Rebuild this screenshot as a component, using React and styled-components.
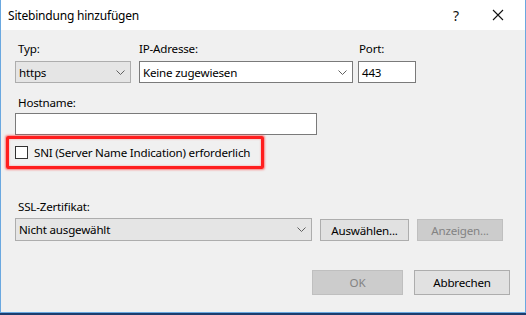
import React from 'react';
import styled, { createGlobalStyle } from 'styled-components';

const Global = createGlobalStyle`
  html, body { margin: 0; padding: 0; background: #1c3d6e; }
  body {
    font-family: "Noto Sans", "Open Sans", sans-serif;
    font-size: 11.6px;
    letter-spacing: -0.2px;
    color: #000;
    white-space: nowrap;
  }
`;

const Window = styled.div`
  width: 524px;
  height: 312px;
  border: 1px solid #6aa8e0;
  border-top: none;
  background: #f0f0f0;
  display: flex;
  flex-direction: column;
`;

const TitleBar = styled.div`
  height: 30px;
  background: #fff;
  display: flex;
  align-items: center;
  padding: 0 6px 0 7px;
`;

const Title = styled.div`
  flex: 1;
  font-size: 12px;
`;

const TitleButton = styled.div`
  width: 42px;
  height: 30px;
  display: flex;
  align-items: center;
  justify-content: center;
  font-size: 14px;
  color: #111;
`;

const Body = styled.div`
  flex: 1;
  padding: 11px 0 0 14px;
  display: flex;
  flex-direction: column;
`;

const Row = styled.div`
  display: flex;
  align-items: flex-end;
  gap: ${p => p.$gap || 8}px;
`;

const Field = styled.div`
  display: flex;
  flex-direction: column;
  width: ${p => p.$w}px;
`;

const Label = styled.div`
  height: 15px;
  line-height: 15px;
  padding-left: ${p => p.$pl ?? 3}px;
  margin-bottom: ${p => p.$mb ?? 5}px;
`;

const Combo = styled.div`
  height: 22px;
  box-sizing: border-box;
  border: 1px solid ${p => (p.$white ? '#7a7a7a' : '#adadad')};
  background: ${p => (p.$white ? '#fff' : '#e5e5e5')};
  display: flex;
  align-items: center;
  padding-left: 3px;
  padding-right: 5px;
`;

const ComboText = styled.span`
  flex: 1;
`;

const TextBox = styled.div`
  height: 22px;
  box-sizing: border-box;
  border: 1px solid #7a7a7a;
  background: #fff;
  display: flex;
  align-items: center;
  padding-left: 3px;
`;

const Highlight = styled.div`
  margin: 1px 0 0 -9px;
  width: 258px;
  height: 33px;
  box-sizing: border-box;
  border: 3px solid #ff1e1e;
  box-shadow: 0 0 2px 1px rgba(255, 40, 40, 0.55), inset 0 0 2px rgba(255, 40, 40, 0.5);
  border-radius: 2px;
  display: flex;
  align-items: center;
  padding-left: 6px;
  gap: 6px;
`;

const CheckBox = styled.div`
  width: 13px;
  height: 13px;
  flex: none;
  box-sizing: border-box;
  border: 1px solid #333;
  background: #fff;
`;

const Button = styled.div`
  width: ${p => p.$w}px;
  height: ${p => p.$h || 22}px;
  box-sizing: border-box;
  border: 1px solid ${p => (p.$disabled ? '#bfbfbf' : '#adadad')};
  background: ${p => (p.$disabled ? '#cccccc' : '#e1e1e1')};
  color: ${p => (p.$disabled ? '#838383' : '#000')};
  display: flex;
  align-items: center;
  justify-content: center;
`;

const Footer = styled.div`
  display: flex;
  gap: 11px;
  margin-top: 29px;
  padding-left: 297px;
`;

const Chevron = () => (
  <svg width="9" height="5" viewBox="0 0 9 5">
    <path d="M0.5 0.5 L4.5 4.5 L8.5 0.5" fill="none" stroke="#606060" strokeWidth="1" />
  </svg>
);

const CloseIcon = () => (
  <svg width="12" height="12" viewBox="0 0 12 12">
    <path d="M1 1 L11 11 M11 1 L1 11" stroke="#111" strokeWidth="1.1" />
  </svg>
);

export default function App() {
  return (
    <>
      <Global />
      <Window>
        <TitleBar>
          <Title>Sitebindung hinzufügen</Title>
          <TitleButton>?</TitleButton>
          <TitleButton><CloseIcon /></TitleButton>
        </TitleBar>
        <Body>
          <Row $gap={8}>
            <Field $w={116}>
              <Label>Typ:</Label>
              <Combo>
                <ComboText>https</ComboText>
                <Chevron />
              </Combo>
            </Field>
            <Field $w={214}>
              <Label $pl={0}>IP-Adresse:</Label>
              <Combo $white>
                <ComboText>Keine zugewiesen</ComboText>
                <Chevron />
              </Combo>
            </Field>
            <Field $w={58} style={{ marginLeft: -3 }}>
              <Label $pl={1}>Port:</Label>
              <TextBox>443</TextBox>
            </Field>
          </Row>
          <Field $w={302} style={{ marginTop: 12 }}>
            <Label $mb={3}>Hostname:</Label>
            <TextBox />
          </Field>
          <Highlight>
            <CheckBox />
            <span>SNI (Server Name Indication) erforderlich</span>
          </Highlight>
          <Field $w={297} style={{ marginTop: 30 }}>
            <Label $mb={4}>SSL-Zertifikat:</Label>
          </Field>
          <Row $gap={8}>
            <Combo style={{ width: 297, height: 23 }}>
              <ComboText>Nicht ausgewählt</ComboText>
              <Chevron />
            </Combo>
            <Button $w={89} $h={22}>Auswählen...</Button>
            <Button $w={86} $h={22} $disabled>Anzeigen...</Button>
          </Row>
          <Footer>
            <Button $w={91} $h={25} $disabled>OK</Button>
            <Button $w={96} $h={25}>Abbrechen</Button>
          </Footer>
        </Body>
      </Window>
    </>
  );
}
